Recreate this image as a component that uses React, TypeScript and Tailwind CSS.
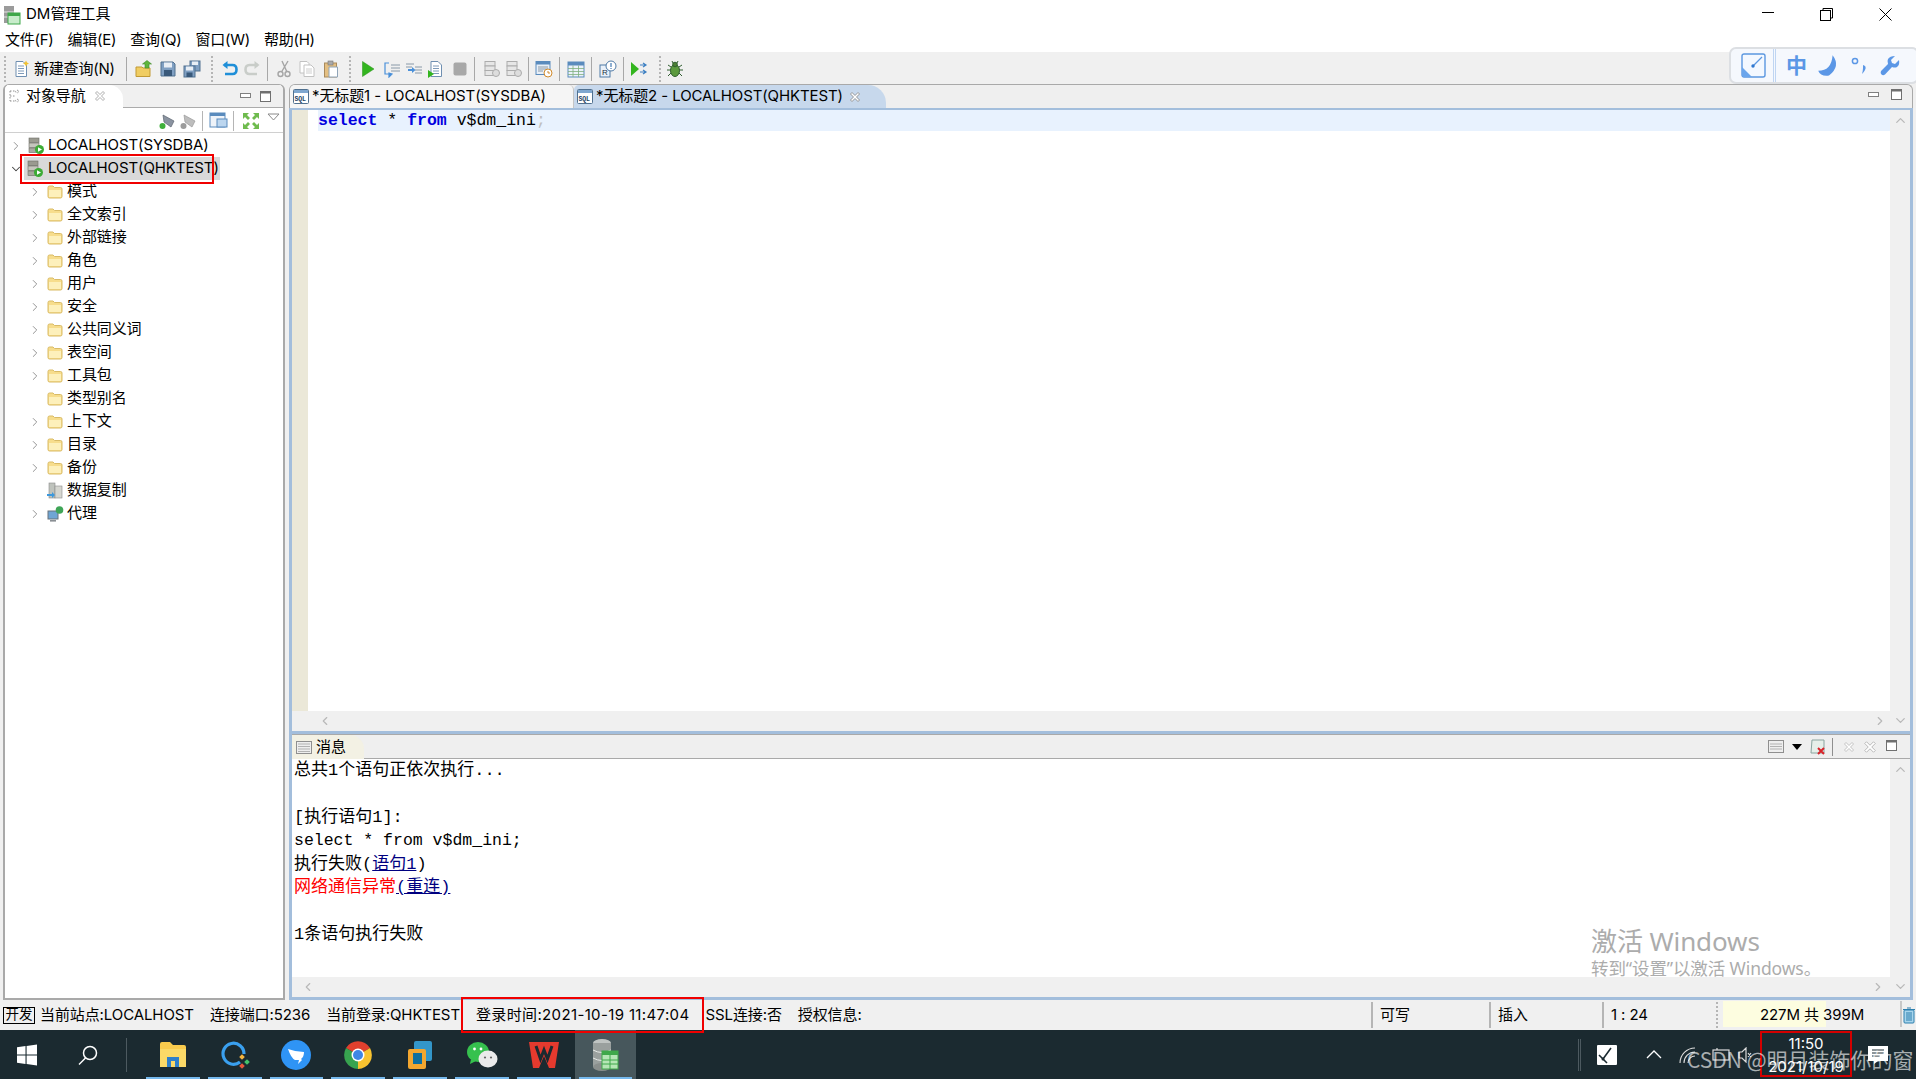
import React from "react";
import { ChevronRight, ChevronDown, ChevronUp, ChevronLeft } from "lucide-react";

const FONT = { fontFamily: '"Inter","Noto Sans CJK SC",sans-serif' };

const Folder = () => (
  <svg width="16" height="14" viewBox="0 0 16 14" className="shrink-0">
    <path d="M1 2.5Q1 1 2.5 1H6L7.5 2.5H13.5Q15 2.5 15 4V11.5Q15 13 13.5 13H2.5Q1 13 1 11.5Z" fill="#f7dd8c" stroke="#d9bb66" />
    <path d="M2 5H14V11.5Q14 12 13.5 12H2.5Q2 12 2 11.5Z" fill="#fdf0bb" />
  </svg>
);

const Server = () => (
  <svg width="18" height="18" viewBox="0 0 18 18" className="shrink-0">
    <rect x="2" y="1" width="10" height="4.6" fill="#9a9a90" stroke="#6d6d66" strokeWidth=".6" />
    <rect x="2" y="6" width="10" height="4.6" fill="#c5c5bd" stroke="#6d6d66" strokeWidth=".6" />
    <rect x="2" y="11" width="10" height="4.6" fill="#a8a89f" stroke="#6d6d66" strokeWidth=".6" />
    <circle cx="12.5" cy="12.5" r="4.5" fill="#3cab35" />
    <path d="M11 10.3L15 12.5L11 14.7Z" fill="#fff" />
  </svg>
);

const SqlIcon = () => (
  <svg width="16" height="15" viewBox="0 0 16 15" className="shrink-0">
    <rect x=".5" y=".5" width="15" height="14" rx="1" fill="#fff" stroke="#50708f" />
    <rect x="1" y="1" width="14" height="3" fill="#7fa7cf" />
    <text x="1.5" y="12" fontSize="6.5" fontWeight="700" fontFamily="Liberation Mono" fill="#23415f">SQL</text>
  </svg>
);

const CloseX = ({ c = "#808080", s = 12 }: { c?: string; s?: number }) => (
  <svg width={s} height={s} viewBox="0 0 12 12" className="shrink-0">
    <path d="M1.5 3L3 1.5L6 4.5L9 1.5L10.5 3L7.5 6L10.5 9L9 10.5L6 7.5L3 10.5L1.5 9L4.5 6Z" fill="#fff" stroke={c} strokeWidth=".8" />
  </svg>
);

const MinBtn = () => (
  <svg width="11" height="6" viewBox="0 0 11 6"><rect x=".5" y=".5" width="10" height="4" fill="#fff" stroke="#808080" /></svg>
);
const MaxBtn = () => (
  <svg width="11" height="11" viewBox="0 0 11 11"><rect x=".5" y=".5" width="10" height="10" fill="#fff" stroke="#707070" /><rect x="0" y="0" width="11" height="2.5" fill="#707070" /></svg>
);

const Doc = ({ c = "#6f8fb1", badge }: { c?: string; badge?: React.ReactNode }) => (
  <svg width="18" height="18" viewBox="0 0 18 18">
    <path d="M4 1.5H11L14.5 5V16.5H4Z" fill="#fff" stroke={c} />
    <path d="M6 6H12M6 8.5H12M6 11H12M6 13.5H12" stroke={c} strokeWidth=".9" />
    {badge}
  </svg>
);

const I: Record<string, React.ReactNode> = {
  new: <Doc badge={<path d="M14 0.5L15 2.5L17 3.5L15 4.5L14 6.5L13 4.5L11 3.5L13 2.5Z" fill="#f1c232" />} />,
  open: (
    <svg width="18" height="18" viewBox="0 0 18 18">
      <path d="M1 7H7L8 8H15V16.5H1Z" fill="#f0cd62" stroke="#c19a35" />
      <path d="M10 8V4H7.5L12 .5L16.5 4H14V8Z" fill="#5fb53c" stroke="#3f8a2a" strokeWidth=".6" />
    </svg>
  ),
  save: (
    <svg width="18" height="18" viewBox="0 0 18 18">
      <path d="M2 2H14L16 4V16H2Z" fill="#7f9fc2" stroke="#51708f" />
      <rect x="5" y="2.5" width="8" height="5" fill="#e8eef5" />
      <rect x="5" y="10" width="8" height="6" fill="#39597a" />
    </svg>
  ),
  saveall: (
    <svg width="20" height="18" viewBox="0 0 20 18">
      <rect x="8" y="1" width="10" height="10" fill="#7f9fc2" stroke="#51708f" />
      <rect x="10" y="1.5" width="6" height="3.5" fill="#e8eef5" />
      <rect x="2" y="6" width="11" height="11" fill="#7f9fc2" stroke="#51708f" />
      <rect x="4" y="6.5" width="7" height="4" fill="#e8eef5" />
      <rect x="4.5" y="12.5" width="6" height="4.5" fill="#39597a" />
    </svg>
  ),
  undo: (
    <svg width="18" height="18" viewBox="0 0 18 18" fill="none">
      <path d="M3 5H11.5Q15.5 5 15.5 9.5T11.5 14H4" stroke="#1f8fd8" strokeWidth="2.6" />
      <path d="M6.5 1L1.5 5L6.5 9Z" fill="#1f8fd8" />
    </svg>
  ),
  redo: (
    <svg width="18" height="18" viewBox="0 0 18 18" fill="none">
      <path d="M15 5H6.5Q2.5 5 2.5 9.5T6.5 14H14" stroke="#c9cdc9" strokeWidth="2.6" />
      <path d="M11.5 1L16.5 5L11.5 9Z" fill="#c9cdc9" />
    </svg>
  ),
  cut: (
    <svg width="16" height="18" viewBox="0 0 16 18" fill="none" stroke="#a5a5a5" strokeWidth="1.4">
      <path d="M12 1L5.5 12M6 1L11 12" />
      <circle cx="4.5" cy="14" r="2.5" /><circle cx="11.5" cy="14" r="2.5" />
    </svg>
  ),
  copy: (
    <svg width="18" height="18" viewBox="0 0 18 18" fill="#fff" stroke="#c2c2c2">
      <path d="M2 1.5H9L11 3.5V13H2Z" /><path d="M6 5H13L16 8V16.5H6Z" />
      <path d="M8 9H14M8 11H14M8 13H14" strokeWidth=".8" />
    </svg>
  ),
  paste: (
    <svg width="16" height="18" viewBox="0 0 16 18">
      <rect x="1.5" y="3" width="12" height="14" fill="#e4bf82" stroke="#a88a5c" />
      <rect x="5" y="1" width="5" height="4" fill="#aaa" stroke="#777" strokeWidth=".6" />
      <path d="M6 7H14.5V17H6Z" fill="#fff" stroke="#8fa4b8" />
    </svg>
  ),
  run: <svg width="14" height="16" viewBox="0 0 14 16"><path d="M1.5 0.5L13 8L1.5 15.5Z" fill="#33b51f" stroke="#248f15" strokeWidth=".5" /></svg>,
  step1: (
    <svg width="18" height="18" viewBox="0 0 18 18" fill="none" stroke="#4a90d9" strokeWidth="1.2">
      <path d="M6 3H2V14H6" /><path d="M8 5H17M8 8H17M8 11H17" stroke="#7d8f9f" strokeWidth=".9" /><path d="M6 13V17L9 14Z" fill="#4a90d9" />
    </svg>
  ),
  step2: (
    <svg width="18" height="18" viewBox="0 0 18 18" fill="none">
      <path d="M1 4H9M1 7H7M10 10H17M10 13H17M10 7H17" stroke="#7d8f9f" strokeWidth=".9" /><path d="M3 9H7V7L10.5 10L7 13V11H3Z" fill="#4a90d9" />
    </svg>
  ),
  step3: <Doc badge={<path d="M1 10L7 14L1 18Z" fill="#33b51f" />} />,
  stop: <svg width="14" height="14" viewBox="0 0 14 14"><rect x=".5" y=".5" width="13" height="13" rx="2" fill="#a8a8a8" /></svg>,
  db1: (
    <svg width="18" height="18" viewBox="0 0 18 18" fill="#e6e6e6" stroke="#acacac">
      <rect x="2" y="1.5" width="10" height="4.5" /><rect x="2" y="6" width="10" height="4.5" /><rect x="2" y="10.5" width="10" height="5" />
      <circle cx="13" cy="13" r="3.5" fill="#ddd" />
    </svg>
  ),
  win: (
    <svg width="18" height="18" viewBox="0 0 18 18">
      <rect x="1" y="1.5" width="14" height="13" fill="#e7eff8" stroke="#5a8bbd" /><rect x="1" y="1.5" width="14" height="3" fill="#5a8bbd" />
      <path d="M3 7H13M3 9H13M3 11H8" stroke="#8d9aa6" />
      <circle cx="13" cy="13" r="4" fill="#fff" stroke="#d08a2c" /><path d="M13 11V13H15" stroke="#d08a2c" fill="none" />
    </svg>
  ),
  table: (
    <svg width="18" height="17" viewBox="0 0 18 17">
      <rect x="1" y="1" width="16" height="15" fill="#eaf1f9" stroke="#5a8bbd" /><rect x="1" y="1" width="16" height="3.5" fill="#5a8bbd" />
      <path d="M1 7.5H17M1 10.5H17M1 13.5H17M6 4.5V16M11.5 4.5V16" stroke="#7fb07f" strokeWidth=".8" />
    </svg>
  ),
  info: (
    <svg width="18" height="18" viewBox="0 0 18 18" fill="none">
      <rect x="1" y="5" width="10" height="12" fill="#eaf1f9" stroke="#4f7aa6" /><text x="3" y="15" fontSize="8" fontFamily="Liberation Sans" fill="#234">R</text>
      <circle cx="12" cy="6" r="5" fill="#fff" stroke="#4f7aa6" /><path d="M12 3V7M12 8V9" stroke="#1c5fa3" />
    </svg>
  ),
  runs: (
    <svg width="18" height="18" viewBox="0 0 18 18">
      <path d="M1 2L9 9L1 16Z" fill="#33b51f" /><path d="M10 5H15M13 3L16 5L13 7M10 12H15M13 10L16 12L13 14" stroke="#3c7fc2" strokeWidth="1.2" fill="none" />
    </svg>
  ),
  bug: (
    <svg width="16" height="18" viewBox="0 0 16 18" stroke="#2f5e2f" strokeWidth="1">
      <path d="M1 5L4 7M15 5L12 7M0 10H4M16 10H12M1 16L4 13M15 16L12 13M5 1L6.5 4M11 1L9.5 4" fill="none" />
      <ellipse cx="8" cy="10.5" rx="4.5" ry="6" fill="#5c9a3e" /><circle cx="8" cy="4.5" r="2.3" fill="#4b7f33" />
    </svg>
  ),
};

const Sep = ({ w = 1 }: { w?: number }) => <div className="w-px h-[24px] bg-[#a8a8a8] shrink-0" style={{ marginLeft: w, marginRight: w }} />;
const Grip = () => <div className="w-[3px] h-[26px] shrink-0 border-l-2 border-dotted border-[#b5b5b5]" />;

const Cell = ({ w, children }: { w: number; children?: React.ReactNode }) => (
  <div className="flex items-center justify-center shrink-0" style={{ width: w }}>{children}</div>
);

const Toolbar = () => (
  <div className="h-[32px] bg-[#f0f0f0] flex items-center pl-[4px] pt-[2px] shrink-0">
    <Grip />
    <Cell w={27}>{I.new}</Cell>
    <span className="text-[15px] text-black w-[86px] whitespace-nowrap tracking-[-0.2px]">新建查询(N)</span>
    <div className="w-[5px]" />
    <Sep />
    <Cell w={6} />
    <Cell w={20}>{I.open}</Cell>
    <Cell w={28}>{I.save}</Cell>
    <Cell w={20}>{I.saveall}</Cell>
    <div className="w-[9px]" /><Grip /><div className="w-[5px]" />
    <Cell w={22}>{I.undo}</Cell>
    <Cell w={22}>{I.redo}</Cell>
    <Cell w={8}><Sep w={0} /></Cell>
    <Cell w={26}>{I.cut}</Cell>
    <Cell w={20}>{I.copy}</Cell>
    <Cell w={28}>{I.paste}</Cell>
    <div className="w-[4px]" /><Grip /><div className="w-[5px]" />
    <Cell w={22}>{I.run}</Cell>
    <Cell w={26}>{I.step1}</Cell>
    <Cell w={18}>{I.step2}</Cell>
    <Cell w={26}>{I.step3}</Cell>
    <Cell w={22}>{I.stop}</Cell>
    <Sep w={3} />
    <Cell w={27}>{I.db1}</Cell>
    <Cell w={18}>{I.db1}</Cell>
    <Cell w={5} />
    <Sep w={0} />
    <Cell w={30}>{I.win}</Cell>
    <Sep w={0} />
    <Cell w={31}>{I.table}</Cell>
    <Sep w={0} />
    <Cell w={31}>{I.info}</Cell>
    <Sep w={0} />
    <Cell w={29}>{I.runs}</Cell>
    <div className="w-[6px]" /><Grip /><div className="w-[4px]" />
    <Cell w={18}>{I.bug}</Cell>
  </div>
);

const tree: [string, string, boolean][] = [
  ["模式", "f", true], ["全文索引", "f", true], ["外部链接", "f", true], ["角色", "f", true], ["用户", "f", true],
  ["安全", "f", true], ["公共同义词", "f", true], ["表空间", "f", true], ["工具包", "f", true], ["类型别名", "f", false],
  ["上下文", "f", true], ["目录", "f", true], ["备份", "f", true], ["数据复制", "r", false], ["代理", "a", true],
];

const Repl = () => (
  <svg width="16" height="17" viewBox="0 0 16 17" className="shrink-0">
    <rect x="2" y="1" width="6" height="15" fill="#bfc3bd" stroke="#8a8a8a" strokeWidth=".6" />
    <rect x="8" y="4" width="7" height="12" fill="#d5d6d0" stroke="#8a8a8a" strokeWidth=".6" />
    <path d="M0 12H5V10L8 13L5 16V14H0Z" fill="#3d98dc" />
  </svg>
);
const Agent = () => (
  <svg width="17" height="16" viewBox="0 0 17 16" className="shrink-0">
    <rect x="1" y="5" width="10" height="8" fill="#6fa5d4" stroke="#68737d" />
    <rect x="3" y="14" width="6" height="1.6" fill="#8a8f94" />
    <circle cx="12.5" cy="4" r="3.8" fill="#3fa557" />
  </svg>
);

const Arrow = ({ show }: { show: boolean }) => (
  <div className="w-[14px] flex justify-center shrink-0">
    {show && <ChevronRight size={14} strokeWidth={1.7} color="#959595" />}
  </div>
);

const LeftPanel = () => (
  <div className="w-[282px] ml-[3px] shrink-0 flex flex-col bg-white border-x-2 border-b-2 border-[#a9a9a9] rounded-tl-[6px] rounded-tr-[6px] overflow-hidden border-t border-t-[#a9a9a9] text-[15px] text-black tracking-[-0.1px]">
    <div className="h-[23px] bg-[#f0f0f0] flex items-stretch border-b border-[#ababab] shrink-0 relative">
      <div className="w-[118px] bg-white rounded-tr-[14px] flex items-center pl-[3px] border-b border-white -mb-px">
        <svg width="12" height="14" viewBox="0 0 12 14" fill="none" stroke="#909090" strokeDasharray="1.5 1.5" className="mr-[6px]"><path d="M2 2H7M2 2V12M2 7H7M2 12H7" /><circle cx="9" cy="2.5" r="1.4" /><circle cx="9" cy="11.5" r="1.4" /></svg>
        <span>对象导航</span>
        <span className="ml-[8px]"><CloseX c="#999999" /></span>
      </div>
      <div className="flex-1" />
      <div className="flex items-center gap-[9px] pr-[12px]"><MinBtn /><MaxBtn /></div>
    </div>
    <div className="h-[25px] flex items-center justify-end pr-[3px] pt-[1px] shrink-0 border-b border-[#d0d0d0]">
      <svg width="20" height="18" viewBox="0 0 20 18" className="mr-[1px]"><path d="M4 3L15 9L12 15L5 10Z" fill="#8a93a0" stroke="#5b6470" strokeWidth=".7" /><circle cx="3.5" cy="14" r="3" fill="#3fb03a" /></svg>
      <svg width="20" height="18" viewBox="0 0 20 18" className="mr-[2px]"><path d="M4 3L15 9L12 15L5 10Z" fill="#bdbdbd" stroke="#999" strokeWidth=".7" /><circle cx="3.5" cy="14" r="3" fill="#9c9c9c" /></svg>
      <div className="w-px h-[20px] bg-[#b5b5b5] mr-[6px]" />
      <svg width="20" height="18" viewBox="0 0 20 18" className="mr-[4px]"><rect x="1" y="1" width="15" height="14" fill="#eef3f9" stroke="#5a8bbd" /><rect x="1" y="1" width="15" height="3" fill="#5a8bbd" /><rect x="8" y="7" width="10" height="8" fill="#bcd6ef" stroke="#5a8bbd" /></svg>
      <div className="w-px h-[20px] bg-[#b5b5b5] mr-[8px]" />
      <svg width="18" height="18" viewBox="0 0 18 18" fill="#6fbb4e" className="mr-[7px]"><path d="M1 1H7L5 3L8 6L6 8L3 5L1 7ZM17 1V7L15 5L12 8L10 6L13 3L11 1ZM1 17V11L3 13L6 10L8 12L5 15L7 17ZM17 17H11L13 15L10 12L12 10L15 13L17 11Z" /></svg>
      <svg width="13" height="8" viewBox="0 0 13 8" className="mb-[8px]"><path d="M1 1H12L6.5 7Z" fill="#fff" stroke="#8a8a8a" /></svg>
    </div>
    <div className="flex-1 flex flex-col pl-[4px] pt-[1px]">
      <div className="h-[23px] flex items-center">
        <Arrow show />
        <div className="ml-[4px] mr-[3px]"><Server /></div>
        <span className="whitespace-nowrap">LOCALHOST(SYSDBA)</span>
      </div>
      <div className="h-[23px] flex items-center relative">
        <div className="w-[14px] flex justify-center shrink-0"><ChevronDown size={14} strokeWidth={1.8} color="#404040" /></div>
        <div className="flex items-center gap-[4px] bg-[#d9d9d9] h-[23px] w-[196px] ml-[1px] pl-[2px]">
          <Server />
          <span className="whitespace-nowrap">LOCALHOST(QHKTEST)</span>
        </div>
        <div className="absolute left-[11px] top-[-3px] w-[194px] h-[30px] border-[2px] border-[#f00000]" />
      </div>
      {tree.map(([t, k, a]) => (
        <div key={t} className="h-[23px] flex items-center pl-[19px]">
          <Arrow show={a} />
          <div className="w-[5px] shrink-0" />
          <div className="w-[20px] shrink-0">{k === "f" ? <Folder /> : k === "r" ? <Repl /> : <Agent />}</div>
          <span>{t}</span>
        </div>
      ))}
    </div>
  </div>
);

const VBar = () => (
  <div className="w-[20px] bg-[#f0f0f0] flex flex-col items-center justify-between py-[3px] shrink-0">
    <ChevronUp size={15} strokeWidth={2} color="#b8b8b8" />
    <ChevronDown size={15} strokeWidth={2} color="#b8b8b8" />
  </div>
);
const HBar = ({ cls }: { cls: string }) => (
  <div className={`h-[20px] bg-[#f0f0f0] flex items-center justify-between shrink-0 ${cls}`}>
    <ChevronLeft size={14} strokeWidth={2} color="#b8b8b8" />
    <ChevronRight size={14} strokeWidth={2} color="#b8b8b8" />
  </div>
);

const M = ({ children }: { children?: React.ReactNode }) => <div className="h-[23.4px] whitespace-pre leading-[23.4px]">{children}</div>;

const RightArea = () => (
  <div className="flex-1 ml-[4px] mr-[3px] flex flex-col min-w-0 text-[15px] text-black tracking-[-0.1px]">
    <div className="h-[24px] bg-[#efefef] flex items-stretch shrink-0 border-t border-[#a9a9a9] rounded-t-[6px] border-x border-x-[#a9a9a9]">
      <div className="w-[284px] flex items-center gap-[3px] pl-[3px] bg-[#f5f5f5] rounded-t-[5px] border-r border-[#c5c5c5] whitespace-nowrap">
        <SqlIcon /><span>*无标题1 - LOCALHOST(SYSDBA)</span>
      </div>
      <div className="w-[312px] flex items-center gap-[3px] pl-[3px] rounded-tr-[18px] rounded-tl-[5px] bg-[#c7d8ec] whitespace-nowrap">
        <SqlIcon /><span>*无标题2 - LOCALHOST(QHKTEST)</span><span className="ml-[3px]"><CloseX /></span>
      </div>
      <div className="flex-1" />
      <div className="flex items-center gap-[12px] pr-[10px] -mt-[4px]"><MinBtn /><MaxBtn /></div>
    </div>
    <div className="h-[623px] flex border-x-[3px] border-t-[2px] border-[#a3bedc] bg-white shrink-0">
      <div className="flex-1 flex flex-col min-w-0">
        <div className="flex-1 flex min-h-0">
          <div className="w-[16px] bg-[#ebe8d8] shrink-0" />
          <div className="w-[10px] shrink-0" />
          <div className="flex-1">
            <div className="h-[21px] bg-[#e8f2fe] text-[16.5px] tracking-normal leading-[21px] whitespace-pre" style={{ fontFamily: '"Liberation Mono",monospace' }}>
              <b className="text-[#0000e0]">select</b><span> * </span><b className="text-[#0000e0]">from</b><span> v$dm_ini</span><span className="text-[#c0c0c0]">;</span>
            </div>
          </div>
        </div>
        <HBar cls="pl-[26px] pr-[3px]" />
      </div>
      <VBar />
    </div>
    <div className="h-[3px] bg-[#a3bedc] shrink-0" />
    <div className="flex-1 flex flex-col border-x-[3px] border-b-[3px] border-[#a3bedc] min-h-0">
      <div className="h-[25px] bg-[#efefef] flex items-stretch shrink-0 border-t border-b border-[#a9a9a9]">
        <div className="w-[72px] -mb-px flex items-center gap-[4px] pl-[4px] bg-[#f3f1e4] rounded-tr-[14px]">
          <svg width="16" height="13" viewBox="0 0 16 13"><rect x=".5" y=".5" width="15" height="12" fill="#eee" stroke="#8f8f8f" /><path d="M2 3H14M2 5.5H14M2 8H14M2 10.5H14" stroke="#b2b2b2" /></svg>
          <span className="text-[15px]">消息</span>
        </div>
        <div className="flex-1" />
        <div className="flex items-center pr-[13px]">
          <svg width="16" height="13" viewBox="0 0 16 13"><rect x=".5" y=".5" width="15" height="12" fill="#eee" stroke="#8f8f8f" /><path d="M2 4H14M2 6.5H14M2 9H14" stroke="#b2b2b2" /></svg>
          <svg width="10" height="6" viewBox="0 0 10 6" className="ml-[8px]"><path d="M0 0H10L5 6Z" fill="#000" /></svg>
          <svg width="16" height="16" viewBox="0 0 16 16" className="ml-[8px]"><path d="M2 1H14V14H1Z" fill="#e6efe9" stroke="#8aa5a0" /><path d="M8 9L14 15M14 9L8 15" stroke="#d8232a" strokeWidth="2" /></svg>
          <div className="w-px h-[18px] bg-[#8f8f8f] ml-[6px]" />
          <span className="ml-[10px]"><CloseX c="#b5b5b5" /></span>
          <span className="ml-[8px] flex"><CloseX c="#b5b5b5" s={14} /></span>
          <span className="ml-[9px] mb-[2px] flex"><MaxBtn /></span>
        </div>
      </div>
      <div className="flex-1 flex bg-white min-h-0 relative">
        <div className="flex-1 flex flex-col min-w-0">
          <div className="flex-1 pl-[2px] text-[17px] tracking-normal" style={{ fontFamily: '"Liberation Mono","Noto Sans CJK SC",monospace' }}>
            <M>总共1个语句正依次执行...</M>
            <M> </M>
            <M>[执行语句1]:</M>
            <M><span className="text-[16.5px]">select * from v$dm_ini;</span></M>
            <M>执行失败(<span className="text-[#000080] underline">语句1</span><span>)</span></M>
            <M><span className="text-[#ff0000]">网络通信异常</span><span className="text-[#000080] underline">(重连)</span></M>
            <M> </M>
            <M>1条语句执行失败</M>
          </div>
          <HBar cls="pl-[9px] pr-[5px]" />
        </div>
        <VBar />
        <div className="absolute left-[1299px] top-[169px] text-[#acacac] leading-none" style={{ fontFamily: '"Noto Sans","Noto Sans CJK SC",sans-serif' }}>
          <div className="text-[26px] whitespace-nowrap">激活 Windows</div>
          <div className="text-[17.5px] mt-[6px] whitespace-nowrap">转到“设置”以激活 Windows。</div>
        </div>
      </div>
    </div>
  </div>
);

const StatusBar = () => (
  <div className="h-[30px] bg-[#f0f0f0] flex items-center shrink-0 text-[15px] text-black whitespace-nowrap pl-[3px] tracking-[-0.1px]">
    <span className="border border-black h-[17px] w-[32px] flex items-center justify-center text-[13.5px] leading-none mr-[5px]">开发</span>
    <span className="mr-[16px]">当前站点:LOCALHOST</span>
    <span className="mr-[16px]">连接端口:5236</span>
    <span className="mr-[16px]">当前登录:QHKTEST</span>
    <span className="relative mr-[16px] tracking-[0.36px]">
      登录时间:2021-10-19 11:47:04
      <span className="absolute left-[-15px] right-[-15px] top-[-7px] h-[36px] border-[2px] border-[#f00000] z-10" />
    </span>
    <span className="mr-[16px]">SSL连接:否</span>
    <span>授权信息:</span>
    <div className="flex-1" />
    <div className="w-[118px] h-[26px] border-l-2 border-[#b5b5b5] pl-[7px] flex items-center">可写</div>
    <div className="w-[113px] h-[26px] border-l-2 border-[#b5b5b5] pl-[7px] flex items-center">插入</div>
    <div className="w-[114px] h-[26px] border-l-2 border-[#b5b5b5] pl-[7px] flex items-center">1 : 24</div>
    <Grip />
    <div className="w-[4px]" />
    <div className="w-[179px] h-[26px] relative border-r-2 border-[#c8c8c8] flex items-center mt-[-2px]">
      <div className="absolute inset-y-0 left-0 w-[103px] bg-[#fdfde0]" />
      <div className="absolute left-0 right-0 pl-[37px] leading-none">227M 共 399M</div>
    </div>
    <div className="w-[14px] flex items-center justify-center">
      <svg width="12" height="17" viewBox="0 0 12 17"><rect x="1" y="3" width="10" height="13" rx="1" fill="#a8d5ec" stroke="#2c7fae" /><path d="M0 2.5H12M4 1H8M4 5V14M6 5V14M8 5V14" stroke="#2c7fae" /></svg>
    </div>
  </div>
);

const Task = ({ children, active }: { children: React.ReactNode; active?: boolean }) => (
  <div className={`w-[61.8px] h-full flex items-center justify-center relative shrink-0 ${active ? "bg-[#47575c]" : ""}`}>
    {children}
    <div className="absolute bottom-0 left-[4px] right-[4px] h-[2px] bg-[#76b9ed]" />
  </div>
);

const Taskbar = () => (
  <div className="h-[49px] bg-[#1b2a30] flex items-center relative shrink-0">
    <div className="w-[54px] h-full flex items-center justify-center">
      <svg width="22" height="22" viewBox="0 0 22 22" fill="#fff"><path d="M1 3.3L9.5 2.1V10.4H1ZM10.6 2L21 .5V10.4H10.6ZM1 11.5H9.5V19.9L1 18.7ZM10.6 11.5H21V21.5L10.6 20Z" /></svg>
    </div>
    <div className="w-[72px] h-full flex items-center justify-center pr-[4px]">
      <svg width="22" height="22" viewBox="0 0 22 22" fill="none" stroke="#fff" strokeWidth="1.5"><circle cx="13" cy="9" r="6.5" /><path d="M8.5 14L2 20.5" /></svg>
    </div>
    <div className="w-px h-[34px] bg-[#4d5a60]" />
    <div className="w-[15px]" />
    <Task>
      <svg width="28" height="27" viewBox="0 0 28 27"><path d="M1 3Q1 1 3 1H11L14 4H25Q27 4 27 6V24Q27 26 25 26H3Q1 26 1 24Z" fill="#f9cb4d" /><rect x="1" y="8" width="26" height="18" fill="#fbd967" /><path d="M8 16H20V26H16V20H12V26H8Z" fill="#2f7fc9" /></svg>
    </Task>
    <Task>
      <svg width="30" height="30" viewBox="0 0 30 30" fill="none"><path d="M20 22A10.5 10.5 0 1 1 24 14" stroke="#3aa0ef" strokeWidth="3.2" /><rect x="20" y="15" width="4" height="4" fill="#f4b43e" transform="rotate(45 22 17)" /><rect x="25" y="20" width="4" height="4" fill="#44c26b" transform="rotate(45 27 22)" /><rect x="20" y="24" width="4" height="4" fill="#e9563c" transform="rotate(45 22 26)" /></svg>
    </Task>
    <Task>
      <svg width="30" height="30" viewBox="0 0 30 30"><circle cx="15" cy="15" r="15" fill="#2f94f5" /><path d="M7 9Q15 12 23 12Q23 17 20 19L21 20L17 24L18 20H14Q10 18 7 9Z" fill="#fff" /></svg>
    </Task>
    <Task>
      <svg width="28" height="28" viewBox="0 0 28 28">
        <path d="M14 14L2 7A14 14 0 0 1 26 7Z" fill="#e1402e" />
        <path d="M14 14L26 7A14 14 0 0 1 14 28Z" fill="#f8c330" />
        <path d="M14 14L14 28A14 14 0 0 1 2 7Z" fill="#37a34f" />
        <circle cx="14" cy="14" r="6.5" fill="#fff" /><circle cx="14" cy="14" r="5" fill="#3f86e5" />
      </svg>
    </Task>
    <Task>
      <svg width="28" height="30" viewBox="0 0 28 30" fill="none">
        <rect x="8" y="1" width="18" height="20" rx="2" fill="#3396c9" /><rect x="2" y="9" width="18" height="20" rx="2" fill="#f3a72f" /><rect x="7" y="13" width="9" height="11" fill="#0f6f9e" />
      </svg>
    </Task>
    <Task>
      <svg width="32" height="28" viewBox="0 0 32 28">
        <ellipse cx="12" cy="11" rx="11" ry="10" fill="#36c14e" /><path d="M5 18L4 23L10 20Z" fill="#36c14e" />
        <circle cx="8.5" cy="8" r="1.4" fill="#fff" /><circle cx="15" cy="8" r="1.4" fill="#fff" />
        <ellipse cx="22" cy="18" rx="9.5" ry="8.5" fill="#ebebeb" /><circle cx="19" cy="16.5" r="1.1" fill="#666" /><circle cx="25" cy="16.5" r="1.1" fill="#666" />
      </svg>
    </Task>
    <Task>
      <svg width="30" height="26" viewBox="0 0 30 26"><path d="M0 0H30L26 26H20L15 14L10 26H4Z" fill="#e53a2e" /><path d="M7 4L11.5 17L15 8L18.5 17L23 4" stroke="#1b2a30" strokeWidth="3" fill="none" /></svg>
    </Task>
    <Task active>
      <svg width="30" height="36" viewBox="0 0 30 36">
        <ellipse cx="12" cy="6" rx="9" ry="4" fill="#bfc4c2" /><rect x="3" y="6" width="18" height="24" fill="#9aa09e" /><ellipse cx="12" cy="30" rx="9" ry="4" fill="#8a8f8d" />
        <path d="M3 13Q12 18 21 13M3 21Q12 26 21 21" stroke="#e8ebe9" fill="none" />
        <rect x="12" y="14" width="16" height="18" fill="#b5e6b5" stroke="#3fa84a" /><rect x="12" y="14" width="16" height="4" fill="#3fa84a" /><path d="M12 23H28M12 27H28M20 18V32" stroke="#3fa84a" />
      </svg>
    </Task>
    <div className="flex-1" />
    <div className="w-[3px] h-[32px] border-x border-[#4d5a60] mr-[16px]" />
    <svg width="20" height="20" viewBox="0 0 20 20" className="mr-[29px]"><rect width="20" height="20" rx="1" fill="#fff" /><path d="M6 14L14 3M2 10L10 18" stroke="#1b2a30" strokeWidth="1.6" /><circle cx="6" cy="14" r="1.5" fill="#1b2a30" /></svg>
    <svg width="16" height="9" viewBox="0 0 16 9" fill="none" className="mr-[17px]"><path d="M1 8L8 1L15 8" stroke="#fff" strokeWidth="1.3" /></svg>
    <svg width="20" height="18" viewBox="0 0 20 18" fill="none" stroke="#ddd" strokeWidth="1.1" className="mr-[12px]"><path d="M1 17A15 15 0 0 1 16 2M5 17A11 11 0 0 1 16 6M9 17A7 7 0 0 1 16 10" /></svg>
    <svg width="20" height="16" viewBox="0 0 20 16" fill="none" stroke="#ddd" strokeWidth="1.2" className="mr-[7px]"><rect x="2" y="3" width="16" height="10" /><path d="M6 3V1" /></svg>
    <svg width="14" height="16" viewBox="0 0 14 16" fill="none" stroke="#ddd" strokeWidth="1.2" className="mr-[8px]"><path d="M1 5H4L8 1V15L4 11H1ZM10 6L13 10M13 6L10 10" /></svg>
    <div className="w-[92px] h-full relative flex flex-col items-center justify-center text-white text-[15px] leading-[23px] mr-[16px]">
      <span>11:50</span>
      <span>2021/10/19</span>
      <span className="absolute left-0 right-0 top-[1px] bottom-[2px] border-[2px] border-[#d40000]" />
    </div>
    <svg width="20" height="20" viewBox="0 0 20 20" className="mr-[28px]"><path d="M0 1H20V16H10L6 19V16H0Z" fill="#fff" /><path d="M4 5H16M4 8H16M4 11H12" stroke="#1b2a30" /></svg>
    <div className="absolute left-[1687px] top-[19px] text-[21px] leading-none whitespace-nowrap text-[#ffffffa0] tracking-normal" style={{ fontFamily: '"Noto Sans CJK SC",sans-serif' }}>CSDN @明月装饰你的窗</div>
  </div>
);

export default function App() {
  return (
    <div className="w-[1916px] h-[1079px] relative overflow-hidden bg-white flex flex-col" style={FONT}>
      <div className="h-[29px] flex items-center shrink-0 relative">
        <svg width="20" height="20" viewBox="0 0 20 20" className="ml-[1px] mr-[5px]">
          <rect x="3" y="1" width="10" height="17" fill="#9b9b9b" /><path d="M3 7H13M3 12H13" stroke="#e5e5e5" />
          <rect x="7" y="8" width="12" height="11" fill="#c8eccb" stroke="#3fa84a" /><rect x="7" y="8" width="12" height="3" fill="#3fa84a" />
        </svg>
        <span className="text-[15px] text-black">DM管理工具</span>
        <div className="flex-1" />
        <svg width="12" height="2" className="mr-[46px] mb-[3px]"><rect width="12" height="1" fill="#000" /></svg>
        <svg width="13" height="13" viewBox="0 0 13 13" fill="none" stroke="#000" className="mr-[46px]"><rect x=".5" y="2.5" width="10" height="10" /><path d="M3 2.5V.5H12.5V10H10.5" /></svg>
        <svg width="13" height="13" viewBox="0 0 13 13" stroke="#000" className="mr-[24px]"><path d="M.5 .5L12.5 12.5M12.5 .5L.5 12.5" /></svg>
      </div>
      <div className="h-[23px] flex items-center shrink-0 pl-[5px] gap-[14px] text-[15px] text-black tracking-[-0.25px]">
        <span>文件(F)</span><span>编辑(E)</span><span>查询(Q)</span><span>窗口(W)</span><span>帮助(H)</span>
      </div>
      <Toolbar />
      <div className="h-[916px] flex shrink-0 bg-[#f0f0f0]">
        <LeftPanel />
        <RightArea />
      </div>
      <StatusBar />
      <Taskbar />
      <div className="absolute left-[1729px] top-[47px] w-[190px] h-[37px] rounded-[7px] border-2 border-[#dcdfe3] bg-[#f5f8fd] flex items-center">
        <svg width="25" height="25" viewBox="0 0 25 25" className="ml-[10px]"><rect x="1" y="1" width="23" height="23" rx="2" fill="#f3f8ff" stroke="#5b97e0" strokeWidth="1.4" /><path d="M1 14L11 24H3Q1 24 1 22Z" fill="#6aa5ec" /><path d="M12 13L21 4" stroke="#5b97e0" strokeWidth="1.3" /><circle cx="12" cy="13" r="1.7" fill="#2f78d0" /></svg>
        <div className="w-[3px] h-[33px] border-x border-[#bfd5f2] ml-[7px]" />
        <span className="ml-[10px] text-[21px] leading-none text-[#5b97e6] font-bold w-[22px]">中</span>
        <svg width="24" height="24" viewBox="0 0 20 20" className="ml-[9px]"><path d="M13 1Q20 10 10 18Q3 19 1 14Q12 14 13 1Z" fill="#5b97e6" /></svg>
        <svg width="16" height="20" viewBox="0 0 16 20" className="ml-[10px]"><circle cx="4" cy="5" r="2.6" fill="none" stroke="#5b97e6" strokeWidth="1.5" /><path d="M12 9Q16 10 14 14Q13 16 11 18Q12 14 12 12Z" fill="#5b97e6" /></svg>
        <svg width="20" height="20" viewBox="0 0 20 20" className="ml-[13px]"><path d="M19 4L15 8L12 7L11 4L15 0Q10 0 8 3Q7 5 8 8L1 15Q0 17 1.5 18.5T5 18.5L12 11Q15 12 17 11Q20 9 19 4Z" fill="#5b97e6" /></svg>
      </div>
    </div>
  );
}
